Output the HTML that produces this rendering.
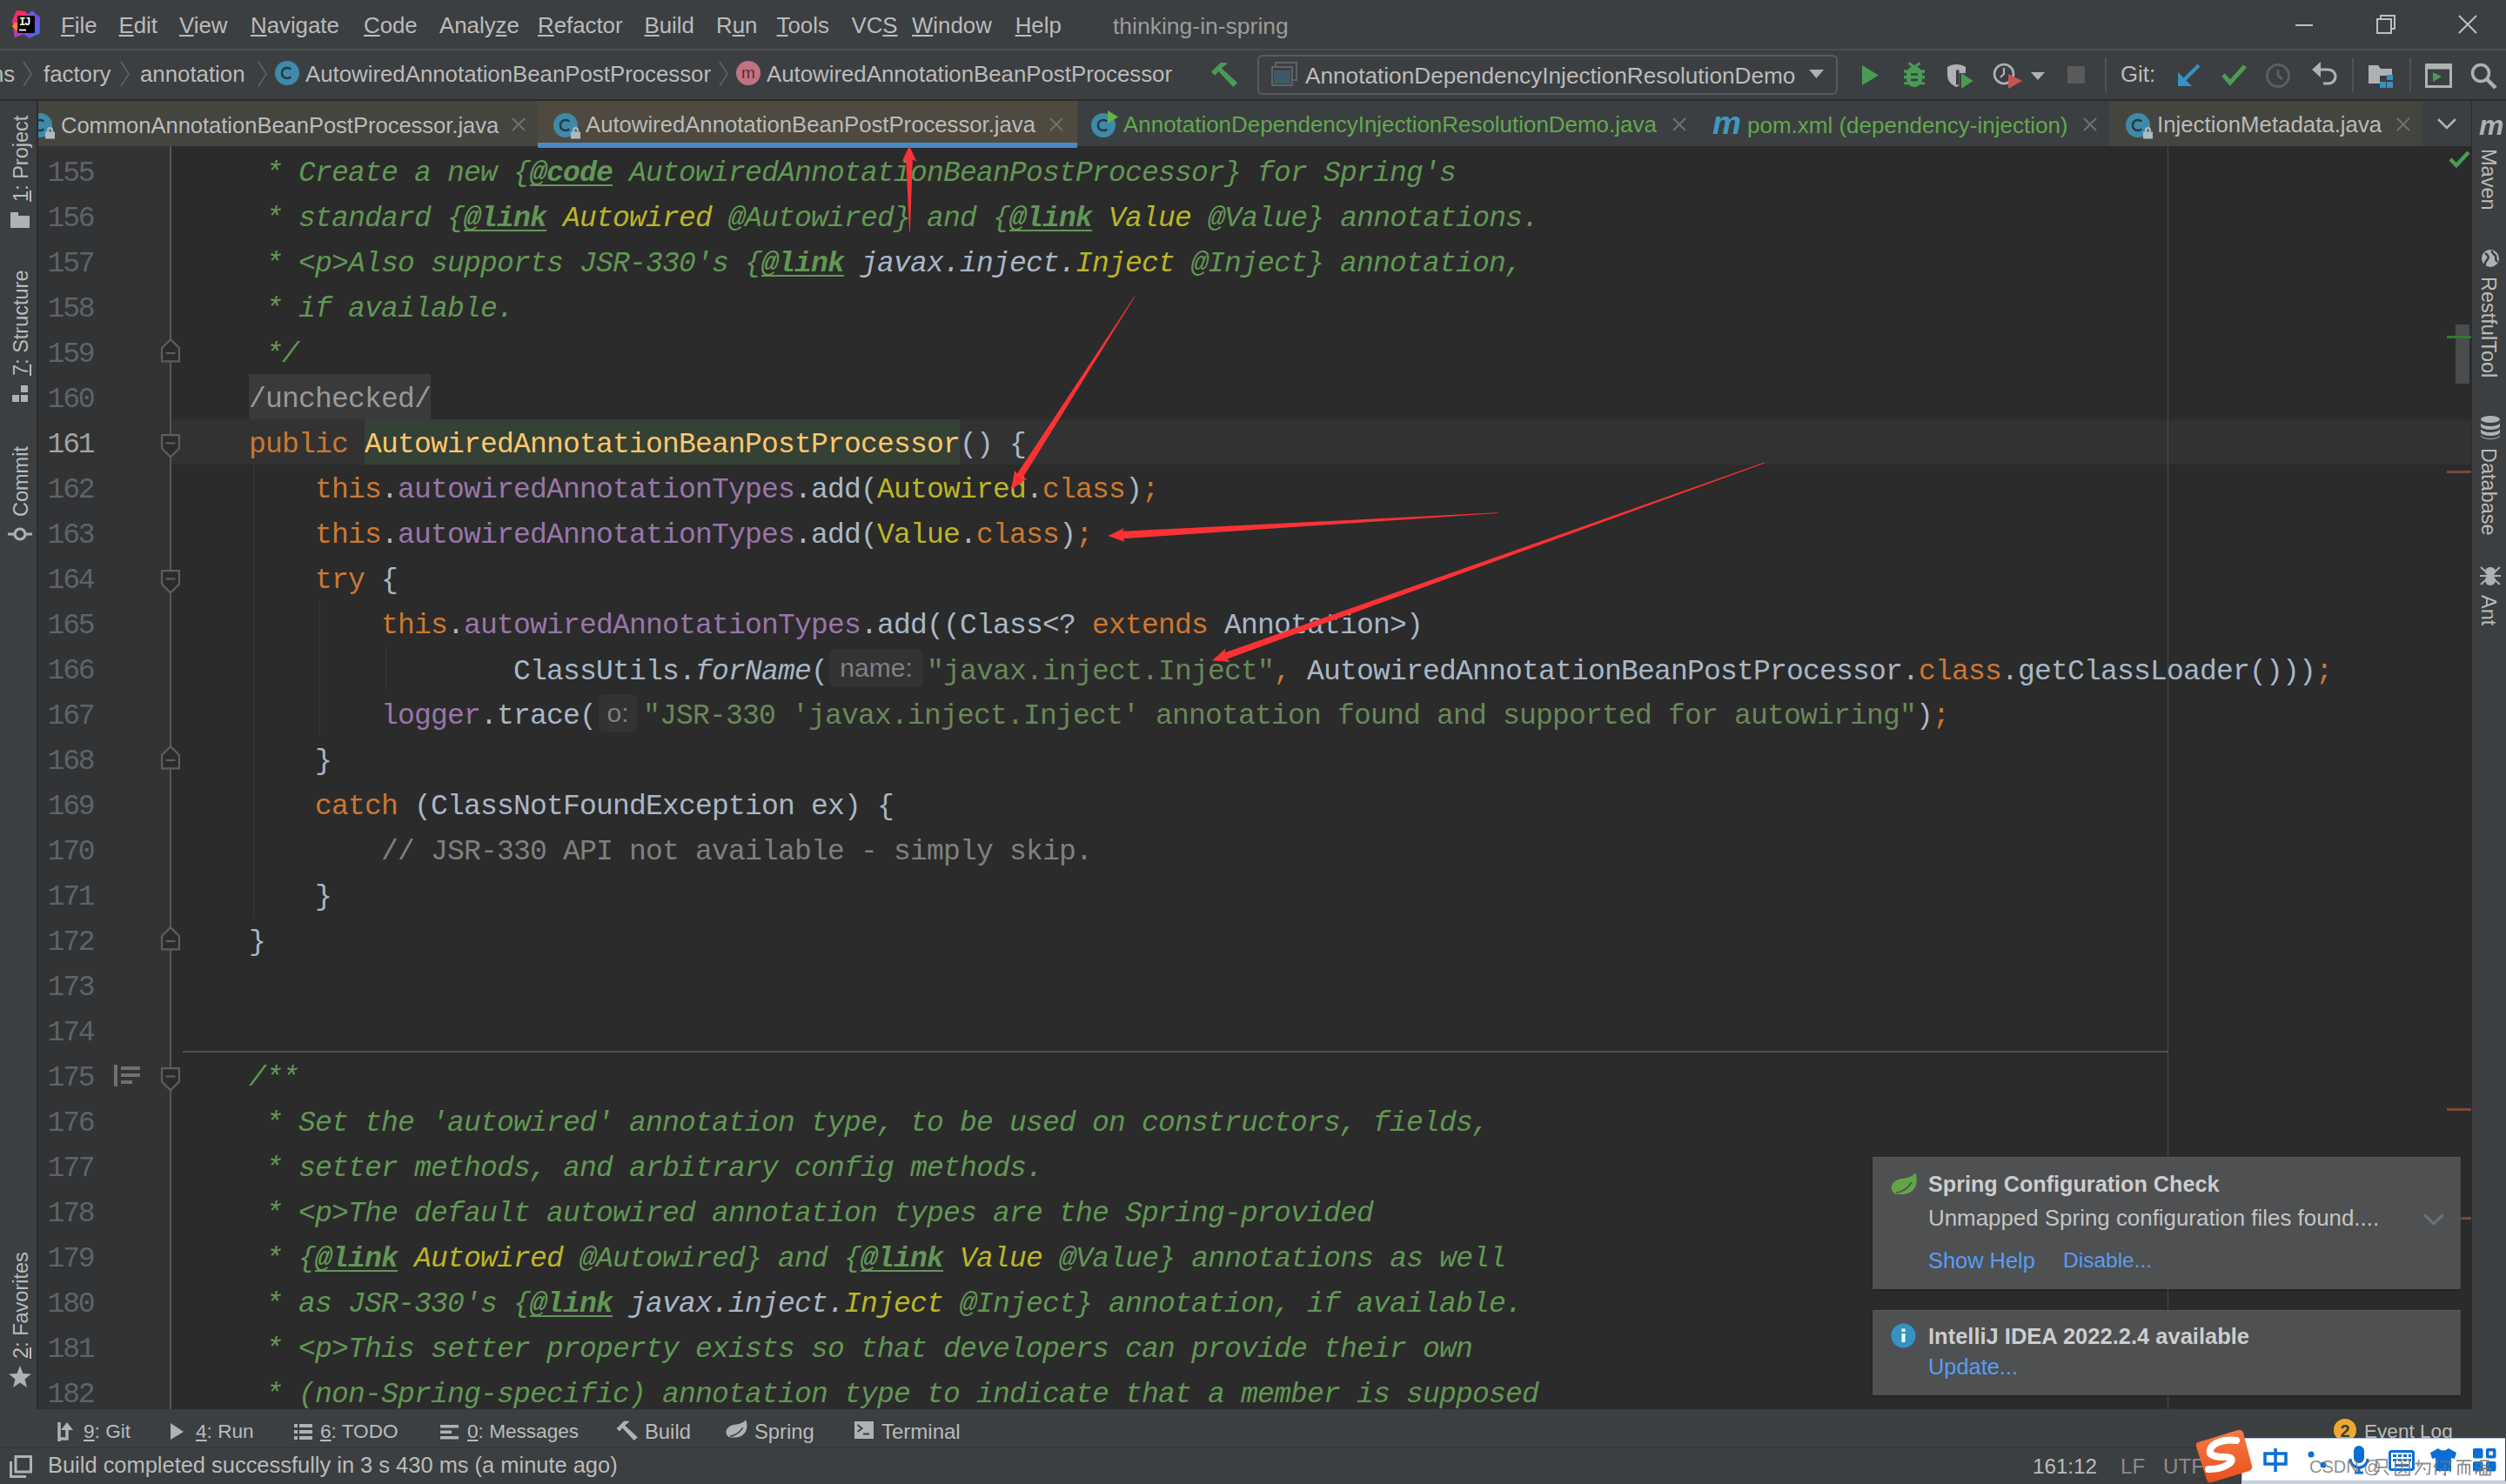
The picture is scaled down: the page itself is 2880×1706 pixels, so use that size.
<!DOCTYPE html><html><head><meta charset="utf-8"><style>
html,body{margin:0;padding:0;}
body{width:2880px;height:1706px;position:relative;overflow:hidden;background:#3c3f41;font-family:"Liberation Sans", sans-serif;}
.t{position:absolute;white-space:pre;}
.r{position:absolute;}
.t u{text-decoration:underline;text-decoration-thickness:2px;text-underline-offset:2px;}
.code{position:absolute;white-space:pre;font-family:"Liberation Mono", monospace;font-size:33px;line-height:52px;letter-spacing:-0.8030px;color:#a9b7c6;}
.ln{position:absolute;white-space:pre;font-family:"Liberation Mono", monospace;font-size:33px;line-height:52px;letter-spacing:-0.8030px;color:#606366;text-align:right;width:57px;}
.k{color:#cc7832} .f{color:#9876aa} .m{color:#ffc66d} .s{color:#6a8759} .c{color:#808080}
.an{color:#bbb529}
.dc{color:#629755;font-style:italic}
.dt{color:#629755;font-style:italic;font-weight:bold;text-decoration:underline;text-decoration-thickness:2px;text-underline-offset:4px}
.dr{color:#bbb529;font-style:italic}
.dp{color:#a9b7c6;font-style:italic}
.it{font-style:italic}
.hint{display:inline-block;position:relative;font-family:"Liberation Sans", sans-serif;letter-spacing:0;color:#808080;background:#333333;border-radius:7px;}
svg{position:absolute;overflow:visible}
</style></head><body>

<div class="r" style="left:0px;top:0px;width:2880px;height:56px;background:#3c3f41;"></div>
<div class="r" style="left:0px;top:56px;width:2880px;height:2px;background:#4b4d4f;"></div>
<div class="t" style="left:70px;top:17.16px;font-size:25.8px;line-height:25.8px;color:#bbbbbb;font-weight:normal;"><u>F</u>ile</div>
<div class="t" style="left:136.5px;top:17.16px;font-size:25.8px;line-height:25.8px;color:#bbbbbb;font-weight:normal;"><u>E</u>dit</div>
<div class="t" style="left:206px;top:17.16px;font-size:25.8px;line-height:25.8px;color:#bbbbbb;font-weight:normal;"><u>V</u>iew</div>
<div class="t" style="left:288px;top:17.16px;font-size:25.8px;line-height:25.8px;color:#bbbbbb;font-weight:normal;"><u>N</u>avigate</div>
<div class="t" style="left:418px;top:17.16px;font-size:25.8px;line-height:25.8px;color:#bbbbbb;font-weight:normal;"><u>C</u>ode</div>
<div class="t" style="left:505px;top:17.16px;font-size:25.8px;line-height:25.8px;color:#bbbbbb;font-weight:normal;">Analy<u>z</u>e</div>
<div class="t" style="left:618px;top:17.16px;font-size:25.8px;line-height:25.8px;color:#bbbbbb;font-weight:normal;"><u>R</u>efactor</div>
<div class="t" style="left:740.5px;top:17.16px;font-size:25.8px;line-height:25.8px;color:#bbbbbb;font-weight:normal;"><u>B</u>uild</div>
<div class="t" style="left:823px;top:17.16px;font-size:25.8px;line-height:25.8px;color:#bbbbbb;font-weight:normal;">R<u>u</u>n</div>
<div class="t" style="left:892.6px;top:17.16px;font-size:25.8px;line-height:25.8px;color:#bbbbbb;font-weight:normal;"><u>T</u>ools</div>
<div class="t" style="left:978.5px;top:17.16px;font-size:25.8px;line-height:25.8px;color:#bbbbbb;font-weight:normal;">VC<u>S</u></div>
<div class="t" style="left:1048px;top:17.16px;font-size:25.8px;line-height:25.8px;color:#bbbbbb;font-weight:normal;"><u>W</u>indow</div>
<div class="t" style="left:1166.7px;top:17.16px;font-size:25.8px;line-height:25.8px;color:#bbbbbb;font-weight:normal;"><u>H</u>elp</div>
<div class="t" style="left:1279px;top:16.57px;font-size:26.5px;line-height:26.5px;color:#9c9c9c;font-weight:normal;">thinking-in-spring</div>
<div class="r" style="left:0px;top:58px;width:2880px;height:56px;background:#3c3f41;"></div>
<div class="r" style="left:0px;top:114px;width:2880px;height:2px;background:#2b2b2b;"></div>
<div class="t" style="left:-10px;top:73.46px;font-size:25.8px;line-height:25.8px;color:#bbbbbb;font-weight:normal;">ns</div>
<svg style="left:26px;top:70px" width="12" height="30"><polyline points="1,1 10,15.0 1,29" fill="none" stroke="#5f6264" stroke-width="1.6"/></svg>
<div class="t" style="left:50px;top:73.46px;font-size:25.8px;line-height:25.8px;color:#bbbbbb;font-weight:normal;">factory</div>
<svg style="left:138px;top:70px" width="12" height="30"><polyline points="1,1 10,15.0 1,29" fill="none" stroke="#5f6264" stroke-width="1.6"/></svg>
<div class="t" style="left:161px;top:73.46px;font-size:25.8px;line-height:25.8px;color:#bbbbbb;font-weight:normal;">annotation</div>
<svg style="left:296px;top:70px" width="12" height="30"><polyline points="1,1 10,15.0 1,29" fill="none" stroke="#5f6264" stroke-width="1.6"/></svg>
<svg style="left:316px;top:70px" width="28" height="28"><circle cx="14" cy="14" r="14" fill="#3e8aa8"/><path d="M18.3 9.7 A6.1 6.1 0 1 0 18.3 18.3" fill="none" stroke="#26393f" stroke-width="2.5"/></svg>
<div class="t" style="left:351px;top:73.46px;font-size:25.8px;line-height:25.8px;color:#bbbbbb;font-weight:normal;">AutowiredAnnotationBeanPostProcessor</div>
<svg style="left:826px;top:70px" width="12" height="30"><polyline points="1,1 10,15.0 1,29" fill="none" stroke="#5f6264" stroke-width="1.6"/></svg>
<svg style="left:846px;top:70px" width="28" height="28"><circle cx="14" cy="14" r="14" fill="#c07482"/><text x="14" y="20" text-anchor="middle" font-family="Liberation Sans" font-size="19" fill="#5b2a35">m</text></svg>
<div class="t" style="left:881px;top:73.46px;font-size:25.8px;line-height:25.8px;color:#bbbbbb;font-weight:normal;">AutowiredAnnotationBeanPostProcessor</div>
<svg style="left:1385px;top:65px" width="40" height="40"><polygon points="7,17.8 17.8,7 25,7.3 25,8.4 18.9,13.5 25.5,19.5 37.2,30.2 32.3,35 22.1,24.3 15.4,17 11.3,21.8" fill="#499c54"/></svg>
<div class="r" style="left:1446px;top:64px;width:663px;height:42px;border:2px solid #5a5d5f;border-radius:6px;box-sizing:content-box;left:1445px;top:63px"></div>
<svg style="left:1461px;top:71px" width="30" height="28"><rect x="5" y="1" width="24" height="20" fill="none" stroke="#5f6366" stroke-width="2"/><rect x="1" y="6" width="23" height="21" fill="#3c3f41" stroke="#5f6366" stroke-width="2"/><rect x="3" y="10" width="19" height="15" fill="#3f5a66"/></svg>
<div class="t" style="left:1500px;top:73.82px;font-size:26.2px;line-height:26.2px;color:#bbbbbb;font-weight:normal;">AnnotationDependencyInjectionResolutionDemo</div>
<svg style="left:2079px;top:80px" width="18" height="11"><polygon points="0,0 17,0 8.5,10" fill="#aeb0b2"/></svg>
<svg style="left:2140px;top:75px" width="20" height="24"><polygon points="0,0 19,11.5 0,23" fill="#499c54"/></svg>
<svg style="left:2186px;top:70px" width="28" height="32"><g fill="#499c54"><polyline points="7.5,2.5 14,7 20.5,2.5" fill="none" stroke="#499c54" stroke-width="3"/><ellipse cx="14" cy="18" rx="9.5" ry="12"/><rect x="2" y="10.4" width="24" height="3.4"/><rect x="2" y="17" width="24" height="3.5"/><rect x="2" y="24.4" width="24" height="2.8"/></g><g fill="#3c3f41"><rect x="10" y="14.3" width="8" height="2.4"/><rect x="10" y="20.5" width="8" height="2.8"/></g></svg>
<svg style="left:2236px;top:72px" width="34" height="32"><path d="M2 5 C8 1 17 1 23 5 L23 15 C23 22 18 26 12 28 C6 25 2 21 2 14 Z" fill="#afb1b3"/><rect x="12" y="8.5" width="3.5" height="17" fill="#3c3f41"/><rect x="15.5" y="12" width="9" height="18" fill="#3c3f41"/><polygon points="18,12 31.5,21 18,30" fill="#499c54"/></svg>
<svg style="left:2291px;top:71px" width="36" height="32"><circle cx="12" cy="14" r="11" fill="none" stroke="#afb1b3" stroke-width="2.6"/><path d="M12 7 L12 14 L8 18" fill="none" stroke="#afb1b3" stroke-width="2.2"/><polygon points="17,14 33,22 17,31" fill="#c75450"/></svg>
<svg style="left:2334px;top:83px" width="17" height="10"><polygon points="0,0 16,0 8,9" fill="#afb1b3"/></svg>
<div class="r" style="left:2376px;top:76px;width:20px;height:20px;background:#5a5a5a;"></div>
<div class="r" style="left:2419px;top:67px;width:2px;height:38px;background:#515456;"></div>
<div class="t" style="left:2437px;top:73.16px;font-size:25.8px;line-height:25.8px;color:#bbbbbb;font-weight:normal;">Git:</div>
<svg style="left:2503px;top:73px" width="26" height="26"><path d="M24 2 L5 21" stroke="#3592c4" stroke-width="4"/><polygon points="0,26 0,10 16,26" fill="#3592c4"/></svg>
<svg style="left:2553px;top:73px" width="30" height="26"><polyline points="2,13 10,22 27,3" fill="none" stroke="#499c54" stroke-width="5"/></svg>
<svg style="left:2603px;top:72px" width="30" height="30"><circle cx="15" cy="15" r="12.5" fill="none" stroke="#5b5e60" stroke-width="3"/><path d="M15 8 L15 15 L20 19" fill="none" stroke="#5b5e60" stroke-width="3"/></svg>
<svg style="left:2657px;top:71px" width="30" height="30"><path d="M8 9 L19 9 A8 8 0 0 1 19 25 L13 25" fill="none" stroke="#afb1b3" stroke-width="3.2"/><polygon points="0,9 10,0 10,18" fill="#afb1b3"/></svg>
<div class="r" style="left:2703px;top:67px;width:2px;height:38px;background:#515456;"></div>
<svg style="left:2721px;top:74px" width="32" height="28"><path d="M1 1 L12 1 L15 5 L28 5 L28 22 L1 22 Z" fill="#afb1b3"/><rect x="14" y="13" width="17" height="15" fill="#3c3f41"/><rect x="22" y="12" width="7" height="6" fill="#3592c4"/><rect x="14" y="20" width="7" height="7" fill="#3592c4"/><rect x="22" y="20" width="7" height="7" fill="#3592c4"/></svg>
<div class="r" style="left:2769px;top:67px;width:2px;height:38px;background:#515456;"></div>
<svg style="left:2787px;top:73px" width="32" height="28"><rect x="1.5" y="1.5" width="28" height="25" fill="none" stroke="#afb1b3" stroke-width="3"/><rect x="1.5" y="1.5" width="28" height="5" fill="#afb1b3"/><polygon points="9,10 19,15 9,21" fill="#499c54"/></svg>
<svg style="left:2839px;top:72px" width="32" height="32"><circle cx="12" cy="12" r="9.5" fill="none" stroke="#afb1b3" stroke-width="3.5"/><path d="M19 19 L29 29" stroke="#afb1b3" stroke-width="4.5"/></svg>
<div class="r" style="left:44px;top:116px;width:2797px;height:52px;background:#3c3f41;"></div>
<div class="r" style="left:44px;top:116px;width:574px;height:52px;background:#45453f;"></div>
<div class="r" style="left:618px;top:116px;width:620px;height:52px;background:#4e4a3f;"></div>
<div class="r" style="left:618px;top:164px;width:620px;height:6px;background:#4a88c7;"></div>
<div class="r" style="left:2424px;top:116px;width:360px;height:52px;background:#45453f;"></div>
<div class="r" style="left:44px;top:116px;width:30px;height:52px;overflow:hidden">
<svg style="left:-12px;top:14px" width="28" height="28"><circle cx="14" cy="14" r="14" fill="#3e8aa8"/><path d="M18.3 9.7 A6.1 6.1 0 1 0 18.3 18.3" fill="none" stroke="#26393f" stroke-width="2.5"/></svg>
</div>
<svg style="left:52px;top:145px" width="11" height="15"><path d="M3 7 L3 4.5 A2.5 2.5 0 0 1 8 4.5 L8 7" fill="none" stroke="#aeb9c0" stroke-width="2"/><rect x="0" y="6.5" width="11" height="8" fill="#aeb9c0"/></svg>
<div class="t" style="left:70px;top:131.61px;font-size:25.5px;line-height:25.5px;color:#bbbbbb;font-weight:normal;">CommonAnnotationBeanPostProcessor.java</div>
<svg style="left:588px;top:135px" width="16" height="16"><path d="M1 1 L15 15 M15 1 L1 15" stroke="#6f7173" stroke-width="2"/></svg>
<svg style="left:636px;top:130px" width="28" height="28"><circle cx="14" cy="14" r="14" fill="#3e8aa8"/><path d="M18.3 9.7 A6.1 6.1 0 1 0 18.3 18.3" fill="none" stroke="#26393f" stroke-width="2.5"/></svg>
<svg style="left:656px;top:145px" width="11" height="15"><path d="M3 7 L3 4.5 A2.5 2.5 0 0 1 8 4.5 L8 7" fill="none" stroke="#aeb9c0" stroke-width="2"/><rect x="0" y="6.5" width="11" height="8" fill="#aeb9c0"/></svg>
<div class="t" style="left:673px;top:131.44px;font-size:25.7px;line-height:25.7px;color:#bbbbbb;font-weight:normal;">AutowiredAnnotationBeanPostProcessor.java</div>
<svg style="left:1206px;top:135px" width="16" height="16"><path d="M1 1 L15 15 M15 1 L1 15" stroke="#6f7173" stroke-width="2"/></svg>
<svg style="left:1254px;top:130px" width="28" height="28"><circle cx="14" cy="14" r="14" fill="#3e8aa8"/><path d="M18.3 9.7 A6.1 6.1 0 1 0 18.3 18.3" fill="none" stroke="#26393f" stroke-width="2.5"/></svg>
<svg style="left:1273px;top:127px" width="13" height="16"><polygon points="0,0 12,7.5 0,15" fill="#62b543"/></svg>
<div class="t" style="left:1291px;top:131.23px;font-size:25.95px;line-height:25.95px;color:#62a84f;font-weight:normal;">AnnotationDependencyInjectionResolutionDemo.java</div>
<svg style="left:1922px;top:135px" width="16" height="16"><path d="M1 1 L15 15 M15 1 L1 15" stroke="#6f7173" stroke-width="2"/></svg>
<div class="t" style="left:1968px;top:123px;font-size:37px;line-height:37px;font-weight:bold;font-style:italic;color:#3f98bf;letter-spacing:-1px">m</div>
<div class="t" style="left:2008px;top:131.19px;font-size:26.0px;line-height:26.0px;color:#62a84f;font-weight:normal;">pom.xml (dependency-injection)</div>
<svg style="left:2394px;top:135px" width="16" height="16"><path d="M1 1 L15 15 M15 1 L1 15" stroke="#6f7173" stroke-width="2"/></svg>
<svg style="left:2443px;top:130px" width="28" height="28"><circle cx="14" cy="14" r="14" fill="#3e8aa8"/><path d="M18.3 9.7 A6.1 6.1 0 1 0 18.3 18.3" fill="none" stroke="#26393f" stroke-width="2.5"/></svg>
<svg style="left:2463px;top:145px" width="11" height="15"><path d="M3 7 L3 4.5 A2.5 2.5 0 0 1 8 4.5 L8 7" fill="none" stroke="#aeb9c0" stroke-width="2"/><rect x="0" y="6.5" width="11" height="8" fill="#aeb9c0"/></svg>
<div class="t" style="left:2479px;top:131.36px;font-size:25.8px;line-height:25.8px;color:#bbbbbb;font-weight:normal;">InjectionMetadata.java</div>
<svg style="left:2754px;top:135px" width="16" height="16"><path d="M1 1 L15 15 M15 1 L1 15" stroke="#6f7173" stroke-width="2"/></svg>
<svg style="left:2801px;top:136px" width="22" height="13"><polyline points="1,1 11,11 21,1" fill="none" stroke="#afb1b3" stroke-width="2.6"/></svg>
<div class="r" style="left:0px;top:116px;width:42px;height:1504px;background:#3c3f41;"></div>
<div class="r" style="left:42px;top:116px;width:2px;height:1504px;background:#2b2b2b;"></div>
<div class="r" style="left:44px;top:168px;width:153px;height:1452px;background:#313335;"></div>
<div class="r" style="left:197px;top:168px;width:2644px;height:1452px;background:#2b2b2b;"></div>
<div class="r" style="left:618px;top:164px;width:620px;height:6px;background:#4a88c7;"></div>
<div class="r" style="left:44px;top:482px;width:2797px;height:52px;background:#323232;"></div>
<div class="r" style="left:195px;top:168px;width:2px;height:1452px;background:#555759;"></div>
<div class="r" style="left:2491px;top:168px;width:1px;height:1452px;background:#4b4b4b;"></div>
<div class="r" style="left:210px;top:1208px;width:2281px;height:2px;background:#505050;"></div>
<div class="r" style="left:419px;top:482px;width:684px;height:52px;background:#344134;"></div>
<div class="r" style="left:291px;top:534px;width:1px;height:520px;background:#393939;"></div>
<div class="r" style="left:367px;top:690px;width:1px;height:156px;background:#393939;"></div>
<div class="r" style="left:443px;top:742px;width:1px;height:52px;background:#393939;"></div>
<svg style="left:185px;top:389px" width="23" height="29"><path d="M11 1.1 L20.9 11 V26.4 H1.1 V11 Z" fill="#2b2b2b" stroke="#5b5d5f" stroke-width="2.2"/><path d="M5.5 17 H16.5" stroke="#5b5d5f" stroke-width="2.2"/></svg>
<svg style="left:185px;top:499px" width="23" height="29"><path d="M1.1 1.1 H20.9 V16.5 L11 26.4 L1.1 16.5 Z" fill="#2b2b2b" stroke="#5b5d5f" stroke-width="2.2"/><path d="M5.5 10.5 H16.5" stroke="#5b5d5f" stroke-width="2.2"/></svg>
<svg style="left:185px;top:655px" width="23" height="29"><path d="M1.1 1.1 H20.9 V16.5 L11 26.4 L1.1 16.5 Z" fill="#2b2b2b" stroke="#5b5d5f" stroke-width="2.2"/><path d="M5.5 10.5 H16.5" stroke="#5b5d5f" stroke-width="2.2"/></svg>
<svg style="left:185px;top:857px" width="23" height="29"><path d="M11 1.1 L20.9 11 V26.4 H1.1 V11 Z" fill="#2b2b2b" stroke="#5b5d5f" stroke-width="2.2"/><path d="M5.5 17 H16.5" stroke="#5b5d5f" stroke-width="2.2"/></svg>
<svg style="left:185px;top:1065px" width="23" height="29"><path d="M11 1.1 L20.9 11 V26.4 H1.1 V11 Z" fill="#2b2b2b" stroke="#5b5d5f" stroke-width="2.2"/><path d="M5.5 17 H16.5" stroke="#5b5d5f" stroke-width="2.2"/></svg>
<svg style="left:185px;top:1227px" width="23" height="29"><path d="M1.1 1.1 H20.9 V16.5 L11 26.4 L1.1 16.5 Z" fill="#2b2b2b" stroke="#5b5d5f" stroke-width="2.2"/><path d="M5.5 10.5 H16.5" stroke="#5b5d5f" stroke-width="2.2"/></svg>
<svg style="left:131px;top:1224px" width="31" height="26"><g fill="#6e7072"><rect x="0" y="0" width="4" height="25"/><rect x="8" y="2" width="22" height="4"/><rect x="8" y="10" width="22" height="4"/><rect x="8" y="18" width="13" height="4"/></g></svg>
<svg style="left:2814px;top:173px" width="25" height="21"><polyline points="2,10 9,17 23,2" fill="none" stroke="#499c54" stroke-width="4.5"/></svg>
<div class="r" style="left:2822px;top:373px;width:16px;height:68px;background:#494b4d;"></div>
<div class="r" style="left:2812px;top:386px;width:28px;height:3px;background:#2f7a33;"></div>
<div class="r" style="left:2812px;top:541px;width:28px;height:3px;background:#7a4a36;"></div>
<div class="r" style="left:2812px;top:1274px;width:28px;height:3px;background:#7a4a36;"></div>
<div class="r" style="left:2812px;top:1399px;width:28px;height:3px;background:#7a4a36;"></div>
<div class="ln" style="left:54.6px;top:174.4px;color:#606366;letter-spacing:-2.2px;text-align:left">155</div>
<div class="ln" style="left:54.6px;top:226.4px;color:#606366;letter-spacing:-2.2px;text-align:left">156</div>
<div class="ln" style="left:54.6px;top:278.4px;color:#606366;letter-spacing:-2.2px;text-align:left">157</div>
<div class="ln" style="left:54.6px;top:330.4px;color:#606366;letter-spacing:-2.2px;text-align:left">158</div>
<div class="ln" style="left:54.6px;top:382.4px;color:#606366;letter-spacing:-2.2px;text-align:left">159</div>
<div class="ln" style="left:54.6px;top:434.4px;color:#606366;letter-spacing:-2.2px;text-align:left">160</div>
<div class="ln" style="left:54.6px;top:486.4px;color:#a4a3a3;letter-spacing:-2.2px;text-align:left">161</div>
<div class="ln" style="left:54.6px;top:538.4px;color:#606366;letter-spacing:-2.2px;text-align:left">162</div>
<div class="ln" style="left:54.6px;top:590.4px;color:#606366;letter-spacing:-2.2px;text-align:left">163</div>
<div class="ln" style="left:54.6px;top:642.4px;color:#606366;letter-spacing:-2.2px;text-align:left">164</div>
<div class="ln" style="left:54.6px;top:694.4px;color:#606366;letter-spacing:-2.2px;text-align:left">165</div>
<div class="ln" style="left:54.6px;top:746.4px;color:#606366;letter-spacing:-2.2px;text-align:left">166</div>
<div class="ln" style="left:54.6px;top:798.4px;color:#606366;letter-spacing:-2.2px;text-align:left">167</div>
<div class="ln" style="left:54.6px;top:850.4px;color:#606366;letter-spacing:-2.2px;text-align:left">168</div>
<div class="ln" style="left:54.6px;top:902.4px;color:#606366;letter-spacing:-2.2px;text-align:left">169</div>
<div class="ln" style="left:54.6px;top:954.4px;color:#606366;letter-spacing:-2.2px;text-align:left">170</div>
<div class="ln" style="left:54.6px;top:1006.4px;color:#606366;letter-spacing:-2.2px;text-align:left">171</div>
<div class="ln" style="left:54.6px;top:1058.4px;color:#606366;letter-spacing:-2.2px;text-align:left">172</div>
<div class="ln" style="left:54.6px;top:1110.4px;color:#606366;letter-spacing:-2.2px;text-align:left">173</div>
<div class="ln" style="left:54.6px;top:1162.4px;color:#606366;letter-spacing:-2.2px;text-align:left">174</div>
<div class="ln" style="left:54.6px;top:1214.4px;color:#606366;letter-spacing:-2.2px;text-align:left">175</div>
<div class="ln" style="left:54.6px;top:1266.4px;color:#606366;letter-spacing:-2.2px;text-align:left">176</div>
<div class="ln" style="left:54.6px;top:1318.4px;color:#606366;letter-spacing:-2.2px;text-align:left">177</div>
<div class="ln" style="left:54.6px;top:1370.4px;color:#606366;letter-spacing:-2.2px;text-align:left">178</div>
<div class="ln" style="left:54.6px;top:1422.4px;color:#606366;letter-spacing:-2.2px;text-align:left">179</div>
<div class="ln" style="left:54.6px;top:1474.4px;color:#606366;letter-spacing:-2.2px;text-align:left">180</div>
<div class="ln" style="left:54.6px;top:1526.4px;color:#606366;letter-spacing:-2.2px;text-align:left">181</div>
<div class="ln" style="left:54.6px;top:1578.4px;color:#606366;letter-spacing:-2.2px;text-align:left">182</div>
<div class="code" style="left:210px;top:174.4px"><span class="dc">     * Create a new {</span><span class="dt">@code</span><span class="dc"> AutowiredAnnotationBeanPostProcessor} for Spring&#x27;s</span></div>
<div class="code" style="left:210px;top:226.4px"><span class="dc">     * standard {</span><span class="dt">@link</span><span class="dc"> </span><span class="dr">Autowired</span><span class="dc"> @Autowired} and {</span><span class="dt">@link</span><span class="dc"> </span><span class="dr">Value</span><span class="dc"> @Value} annotations.</span></div>
<div class="code" style="left:210px;top:278.4px"><span class="dc">     * &lt;p&gt;Also supports JSR-330&#x27;s {</span><span class="dt">@link</span><span class="dc"> </span><span class="dp">javax.inject.</span><span class="dr">Inject</span><span class="dc"> @Inject} annotation,</span></div>
<div class="code" style="left:210px;top:330.4px"><span class="dc">     * if available.</span></div>
<div class="code" style="left:210px;top:382.4px"><span class="dc">     */</span></div>
<div class="code" style="left:210px;top:486.4px">    <span class="k">public</span> <span class="m">AutowiredAnnotationBeanPostProcessor</span>() {</div>
<div class="code" style="left:210px;top:538.4px">        <span class="k">this</span>.<span class="f">autowiredAnnotationTypes</span>.add(<span class="an">Autowired</span>.<span class="k">class</span>)<span class="k">;</span></div>
<div class="code" style="left:210px;top:590.4px">        <span class="k">this</span>.<span class="f">autowiredAnnotationTypes</span>.add(<span class="an">Value</span>.<span class="k">class</span>)<span class="k">;</span></div>
<div class="code" style="left:210px;top:642.4px">        <span class="k">try</span> {</div>
<div class="code" style="left:210px;top:694.4px">            <span class="k">this</span>.<span class="f">autowiredAnnotationTypes</span>.add((Class&lt;? <span class="k">extends</span> Annotation&gt;)</div>
<div class="code" style="left:210px;top:746.4px">                    ClassUtils.<span class="it">forName</span>(<span class="hint" style="margin-left:2px;margin-right:4px;width:108px;height:44px;line-height:44px;font-size:30px;vertical-align:3px;text-align:center">name:</span><span class="s">&quot;javax.inject.Inject&quot;</span><span class="k">,</span> AutowiredAnnotationBeanPostProcessor.<span class="k">class</span>.getClassLoader()))<span class="k">;</span></div>
<div class="code" style="left:210px;top:798.4px">            <span class="f">logger</span>.trace(<span class="hint" style="margin-left:3px;margin-right:7px;width:44px;height:44px;line-height:44px;font-size:30px;vertical-align:2px;text-align:center">o:</span><span class="s">&quot;JSR-330 &#x27;javax.inject.Inject&#x27; annotation found and supported for autowiring&quot;</span>)<span class="k">;</span></div>
<div class="code" style="left:210px;top:850.4px">        }</div>
<div class="code" style="left:210px;top:902.4px">        <span class="k">catch</span> (ClassNotFoundException ex) {</div>
<div class="code" style="left:210px;top:954.4px">            <span class="c">// JSR-330 API not available - simply skip.</span></div>
<div class="code" style="left:210px;top:1006.4px">        }</div>
<div class="code" style="left:210px;top:1058.4px">    }</div>
<div class="code" style="left:210px;top:1214.4px"><span class="dc">    /**</span></div>
<div class="code" style="left:210px;top:1266.4px"><span class="dc">     * Set the &#x27;autowired&#x27; annotation type, to be used on constructors, fields,</span></div>
<div class="code" style="left:210px;top:1318.4px"><span class="dc">     * setter methods, and arbitrary config methods.</span></div>
<div class="code" style="left:210px;top:1370.4px"><span class="dc">     * &lt;p&gt;The default autowired annotation types are the Spring-provided</span></div>
<div class="code" style="left:210px;top:1422.4px"><span class="dc">     * {</span><span class="dt">@link</span><span class="dc"> </span><span class="dr">Autowired</span><span class="dc"> @Autowired} and {</span><span class="dt">@link</span><span class="dc"> </span><span class="dr">Value</span><span class="dc"> @Value} annotations as well</span></div>
<div class="code" style="left:210px;top:1474.4px"><span class="dc">     * as JSR-330&#x27;s {</span><span class="dt">@link</span><span class="dc"> </span><span class="dp">javax.inject.</span><span class="dr">Inject</span><span class="dc"> @Inject} annotation, if available.</span></div>
<div class="code" style="left:210px;top:1526.4px"><span class="dc">     * &lt;p&gt;This setter property exists so that developers can provide their own</span></div>
<div class="code" style="left:210px;top:1578.4px"><span class="dc">     * (non-Spring-specific) annotation type to indicate that a member is supposed</span></div>
<div class="r" style="left:286px;top:430px;width:209px;height:52px;background:#3a3a3a;"></div>
<div class="code" style="left:286px;top:434.4px;color:#999999">/unchecked/</div>
<div class="r" style="left:2841px;top:116px;width:39px;height:1504px;background:#3c3f41;"></div>
<div class="r" style="left:2840px;top:116px;width:1px;height:1504px;background:#2b2b2b;"></div>
<div class="r" style="left:0px;top:1620px;width:2880px;height:44px;background:#3c3f41;"></div>
<div class="r" style="left:0px;top:1664px;width:2880px;height:1px;background:#323232;"></div>
<div class="r" style="left:0px;top:1665px;width:2880px;height:41px;background:#3c3f41;"></div>
<div class="t" style="left:13.4px;top:232px;font-size:23.5px;line-height:23.5px;color:#bbbbbb;transform-origin:0 0;transform:rotate(-90deg)"><u>1</u>: Project</div>
<svg style="left:12px;top:244px" width="22" height="18"><path d="M0 0 L9 0 L9 4 L22 4 L22 18 L0 18 Z" fill="#afb1b3"/></svg>
<div class="t" style="left:13.4px;top:432px;font-size:23.5px;line-height:23.5px;color:#bbbbbb;transform-origin:0 0;transform:rotate(-90deg)"><u>7</u>: Structure</div>
<svg style="left:14px;top:443px" width="18" height="19"><rect x="10" y="0" width="8" height="8" fill="#afb1b3"/><rect x="0" y="11" width="8" height="8" fill="#afb1b3"/><rect x="10" y="11" width="8" height="8" fill="#afb1b3"/></svg>
<div class="t" style="left:13.4px;top:594px;font-size:23.5px;line-height:23.5px;color:#bbbbbb;transform-origin:0 0;transform:rotate(-90deg)">Commit</div>
<svg style="left:9px;top:605px" width="28" height="18"><circle cx="14" cy="9" r="6" fill="none" stroke="#afb1b3" stroke-width="3.2"/><path d="M0 9 L8 9 M20 9 L28 9" stroke="#afb1b3" stroke-width="3.2"/></svg>
<div class="t" style="left:13.4px;top:1562px;font-size:23.5px;line-height:23.5px;color:#bbbbbb;transform-origin:0 0;transform:rotate(-90deg)"><u>2</u>: Favorites</div>
<svg style="left:10px;top:1570px" width="26" height="26"><polygon points="13,0 16.5,9 26,9.5 18.5,15.5 21,25 13,19.5 5,25 7.5,15.5 0,9.5 9.5,9" fill="#afb1b3"/></svg>
<div class="t" style="left:2849px;top:128px;font-size:32px;line-height:32px;font-weight:bold;font-style:italic;color:#afb1b3;letter-spacing:-1px">m</div>
<div class="t" style="left:2871.1px;top:171px;font-size:23.5px;line-height:23.5px;color:#bbbbbb;transform-origin:0 0;transform:rotate(90deg)">Maven</div>
<svg style="left:2851px;top:286px" width="22" height="22"><circle cx="11" cy="11" r="10" fill="#afb1b3"/><path d="M5 5 C8 7 10 9 8 12 C6 14 4 15 5 19 M13 2 C12 5 15 6 17 8 C18 10 16 13 19 15" fill="none" stroke="#3c3f41" stroke-width="2.5"/></svg>
<div class="t" style="left:2871.1px;top:318px;font-size:23.5px;line-height:23.5px;color:#bbbbbb;transform-origin:0 0;transform:rotate(90deg)">RestfulTool</div>
<svg style="left:2850px;top:478px" width="24" height="27"><g fill="#afb1b3"><ellipse cx="12" cy="4" rx="11" ry="4"/><path d="M1 8 A11 4 0 0 0 23 8 L23 12 A11 4 0 0 1 1 12 Z"/><path d="M1 15 A11 4 0 0 0 23 15 L23 19 A11 4 0 0 1 1 19 Z"/><path d="M1 22 A11 4 0 0 0 23 22 L23 23 A11 4 0 0 1 1 23 Z"/></g></svg>
<div class="t" style="left:2871.1px;top:515px;font-size:23.5px;line-height:23.5px;color:#bbbbbb;transform-origin:0 0;transform:rotate(90deg)">Database</div>
<svg style="left:2850px;top:650px" width="24" height="24"><g fill="#afb1b3"><ellipse cx="12" cy="7" rx="6" ry="5"/><ellipse cx="12" cy="17" rx="6" ry="6"/></g><path d="M1 2 L23 22 M23 2 L1 22 M0 12 L24 12" stroke="#afb1b3" stroke-width="2"/></svg>
<div class="t" style="left:2871.1px;top:684px;font-size:23.5px;line-height:23.5px;color:#bbbbbb;transform-origin:0 0;transform:rotate(90deg)">Ant</div>
<svg style="left:66px;top:1635px" width="22" height="22"><path d="M2 0 L2 22 M2 19 L11 19 L11 8" fill="none" stroke="#afb1b3" stroke-width="3.5"/><polygon points="4,9 11,0 18,9" fill="#afb1b3"/></svg>
<div class="t" style="left:96px;top:1634.87px;font-size:22.6px;line-height:22.6px;color:#bbbbbb;font-weight:normal;"><u>9</u>: Git</div>
<svg style="left:196px;top:1636px" width="16" height="20"><polygon points="0,0 15,10 0,19" fill="#afb1b3"/></svg>
<div class="t" style="left:225px;top:1634.87px;font-size:22.6px;line-height:22.6px;color:#bbbbbb;font-weight:normal;"><u>4</u>: Run</div>
<svg style="left:338px;top:1637px" width="21" height="18"><g fill="#afb1b3"><rect x="0" y="0" width="4" height="4"/><rect x="6" y="0" width="15" height="4"/><rect x="0" y="7" width="4" height="4"/><rect x="6" y="7" width="15" height="4"/><rect x="0" y="14" width="4" height="4"/><rect x="6" y="14" width="15" height="4"/></g></svg>
<div class="t" style="left:368px;top:1634.87px;font-size:22.6px;line-height:22.6px;color:#bbbbbb;font-weight:normal;"><u>6</u>: TODO</div>
<svg style="left:506px;top:1638px" width="21" height="17"><g fill="#afb1b3"><rect x="0" y="0" width="21" height="3.5"/><rect x="0" y="6.5" width="13" height="3.5"/><rect x="0" y="13" width="21" height="3.5"/></g></svg>
<div class="t" style="left:537px;top:1634.87px;font-size:22.6px;line-height:22.6px;color:#bbbbbb;font-weight:normal;"><u>0</u>: Messages</div>
<svg style="left:700px;top:1626px" width="40" height="40"><g transform="translate(3,2) scale(0.8)"><polygon points="7,17.8 17.8,7 25,7.3 25,8.4 18.9,13.5 25.5,19.5 37.2,30.2 32.3,35 22.1,24.3 15.4,17 11.3,21.8" fill="#afb1b3"/></g></svg>
<div class="t" style="left:741px;top:1633.85px;font-size:23.8px;line-height:23.8px;color:#bbbbbb;font-weight:normal;">Build</div>
<svg style="left:834px;top:1632px" width="26" height="24"><g transform="scale(0.82)"><path d="M6 25 C-4 20 1 8 13 7 C20 6 26 4 28 0 C32 9 30 24 14 25 Z" fill="#afb1b3"/><path d="M6 23.5 C13 22 20 18 24 11" stroke="#3c3f41" stroke-width="1.8" fill="none"/></g></svg>
<div class="t" style="left:867px;top:1633.85px;font-size:23.8px;line-height:23.8px;color:#bbbbbb;font-weight:normal;">Spring</div>
<svg style="left:982px;top:1634px" width="22" height="20"><rect x="0" y="0" width="22" height="20" fill="#afb1b3"/><polyline points="3.5,4 8.5,8 3.5,12" fill="none" stroke="#3c3f41" stroke-width="2"/><rect x="10" y="13.5" width="7" height="2" fill="#3c3f41"/></svg>
<div class="t" style="left:1013px;top:1633.68px;font-size:24.0px;line-height:24.0px;color:#bbbbbb;font-weight:normal;">Terminal</div>
<svg style="left:2682px;top:1631px" width="26" height="26"><circle cx="13" cy="13" r="13" fill="#f0a732"/><text x="13" y="21" text-anchor="middle" font-family="Liberation Sans" font-size="20" font-weight="bold" fill="#3c3f41">2</text></svg>
<div class="t" style="left:2717px;top:1634.87px;font-size:22.6px;line-height:22.6px;color:#bbbbbb;font-weight:normal;">Event Log</div>
<svg style="left:11px;top:1673px" width="26" height="26"><rect x="7" y="1.5" width="17.5" height="17.5" fill="none" stroke="#afb1b3" stroke-width="3"/><path d="M1.5 7 L1.5 24.5 L19 24.5" fill="none" stroke="#afb1b3" stroke-width="3"/></svg>
<div class="t" style="left:55px;top:1672.46px;font-size:25.45px;line-height:25.45px;color:#bbbbbb;font-weight:normal;">Build completed successfully in 3 s 430 ms (a minute ago)</div>
<div class="t" style="left:2336px;top:1673.51px;font-size:24.2px;line-height:24.2px;color:#bbbbbb;font-weight:normal;">161:12</div>
<div class="t" style="left:2437px;top:1673.51px;font-size:24.2px;line-height:24.2px;color:#8c8c8c;font-weight:normal;">LF</div>
<div class="t" style="left:2486px;top:1673.51px;font-size:24.2px;line-height:24.2px;color:#8c8c8c;font-weight:normal;">UTF-8</div>
<svg style="left:0px;top:0px" width="56" height="56"><defs><linearGradient id="gb" x1="0" y1="0" x2="1" y2="1"><stop offset="0" stop-color="#3d7ee8"/><stop offset="0.5" stop-color="#7b47e0"/><stop offset="1" stop-color="#2f7fef"/></linearGradient><linearGradient id="gp" x1="0" y1="0" x2="0" y2="1"><stop offset="0" stop-color="#fe2857"/><stop offset="1" stop-color="#b93fc6"/></linearGradient></defs><polygon points="36.5,12 46,20 45.6,38.6 33.5,44 27,39.5 32,17" fill="url(#gb)"/><polygon points="18.7,12 28.8,13 33,17.3 30,30 17,43 13.9,24.4" fill="url(#gp)"/><polygon points="13.9,30.3 17.8,25.6 22,28 19,35" fill="#fc8a1f"/><polygon points="17,43 27,39.5 22,34" fill="#b33dd0"/><rect x="20.2" y="18.2" width="19.7" height="19.7" fill="#000"/><text x="22" y="29" font-family="Liberation Mono" font-weight="bold" font-size="12.5" fill="#fff" letter-spacing="-1.5">IJ</text><rect x="22" y="33.6" width="8" height="1.8" fill="#fff"/></svg>
<div class="r" style="left:2638px;top:28px;width:20px;height:2px;background:#bfbfbf;"></div>
<svg style="left:2731px;top:17px" width="23" height="23"><path d="M5 4.5 V1 H21 V16 H17.5" fill="none" stroke="#bfbfbf" stroke-width="2"/><rect x="1" y="5" width="16" height="16" fill="none" stroke="#bfbfbf" stroke-width="2"/></svg>
<svg style="left:2825px;top:17px" width="22" height="22"><path d="M1 1 L21 21 M21 1 L1 21" stroke="#bfbfbf" stroke-width="2"/></svg>
<div class="r" style="left:2152px;top:1330px;width:676px;height:151px;background:#4e5052;border-top:1px solid #5a5c5e;box-shadow:0 1px 2px rgba(0,0,0,0.3)"></div>
<svg style="left:2173px;top:1348px" width="31" height="26"><path d="M6 25 C-4 20 1 8 13 7 C20 6 26 4 28 0 C32 9 30 24 14 25 Z" fill="#62a447"/><path d="M6 23.5 C13 22 20 18 24 11" stroke="#4e5052" stroke-width="1.6" fill="none"/></svg>
<div class="t" style="left:2216px;top:1348.67px;font-size:25.2px;line-height:25.2px;color:#cdcdcd;font-weight:bold;">Spring Configuration Check</div>
<div class="t" style="left:2216px;top:1388.08px;font-size:25.9px;line-height:25.9px;color:#c4c4c4;font-weight:normal;">Unmapped Spring configuration files found....</div>
<svg style="left:2785px;top:1395px" width="24" height="15"><polyline points="1.5,1.5 12,12 22.5,1.5" fill="none" stroke="#6f7274" stroke-width="3"/></svg>
<div class="t" style="left:2216px;top:1436.50px;font-size:25.4px;line-height:25.4px;color:#589df6;font-weight:normal;">Show Help</div>
<div class="t" style="left:2371px;top:1437.26px;font-size:24.5px;line-height:24.5px;color:#589df6;font-weight:normal;">Disable...</div>
<div class="r" style="left:2152px;top:1506px;width:676px;height:97px;background:#4e5052;border-top:1px solid #5a5c5e;box-shadow:0 1px 2px rgba(0,0,0,0.3)"></div>
<svg style="left:2173px;top:1521px" width="29" height="29"><circle cx="14.5" cy="14.5" r="14" fill="#3592c4"/><rect x="12.5" y="12" width="4" height="10" fill="#fff"/><rect x="12.5" y="6.5" width="4" height="3.5" fill="#fff"/></svg>
<div class="t" style="left:2216px;top:1524.41px;font-size:25.5px;line-height:25.5px;color:#cdcdcd;font-weight:bold;">IntelliJ IDEA 2022.2.4 available</div>
<div class="t" style="left:2216px;top:1558.50px;font-size:25.4px;line-height:25.4px;color:#589df6;font-weight:normal;">Update...</div>
<svg style="left:0;top:0" width="2880" height="1706"><polygon points="1045.9,266.0 1048.8,183.5 1053.3,185.5 1045.0,167.5 1036.8,185.5 1041.3,183.5 1045.1,266.0" fill="#fb3234"/></svg>
<svg style="left:0;top:0" width="2880" height="1706"><polygon points="1303.7,340.8 1168.9,544.8 1166.2,540.7 1162.0,563.0 1180.5,549.9 1175.6,549.1 1304.3,341.2" fill="#fb3234"/></svg>
<svg style="left:0;top:0" width="2880" height="1706"><polygon points="1721.0,589.3 1290.2,610.8 1292.0,606.9 1273.5,616.0 1292.9,622.9 1290.7,619.2 1721.0,590.1" fill="#fb3234"/></svg>
<svg style="left:0;top:0" width="2880" height="1706"><polygon points="2027.9,531.6 1407.7,750.3 1408.2,745.7 1393.0,759.6 1413.6,760.7 1410.3,757.4 2028.1,532.4" fill="#fb3234"/></svg>
<div class="r" style="left:2576px;top:1653px;width:302px;height:48px;background:#ffffff;border:1px solid #b6c6dd;border-right:none"></div>
<div class="r" style="left:2576px;top:1703px;width:304px;height:3px;background:#c9d2dc;"></div>
<svg style="left:2518px;top:1640px" width="76" height="66"><defs><linearGradient id="so" x1="0" y1="0" x2="0" y2="1"><stop offset="0" stop-color="#f57a45"/><stop offset="1" stop-color="#e9501c"/></linearGradient></defs><path d="M8 18 L54 4 Q58 3 60 7 L70 45 Q71 49 67 51 L24 64 Q20 65 18 61 L6 23 Q5 19 8 18 Z" fill="url(#so)"/><path d="M52 16 C40 14 24 18 22 27 C20 34 30 35 40 35 C48 35 50 40 40 45 C34 48 26 49 20 49" fill="none" stroke="#fff" stroke-width="8" stroke-linecap="round"/></svg>
<svg style="left:2601px;top:1665px" width="28" height="27"><rect x="2" y="6" width="24" height="12" fill="none" stroke="#0a6ed6" stroke-width="3.5"/><rect x="12.3" y="0" width="3.5" height="27" fill="#0a6ed6"/></svg>
<svg style="left:2651px;top:1668px" width="24" height="20"><circle cx="5" cy="4" r="3.5" fill="#0a6ed6"/><circle cx="19" cy="16" r="3.5" fill="#0a6ed6"/></svg>
<svg style="left:2699px;top:1662px" width="24" height="32"><rect x="6" y="0" width="12" height="20" rx="6" fill="#0a6ed6"/><path d="M2 15 A10 10 0 0 0 22 15 M12 25 V31 M7 31 H17" fill="none" stroke="#0a6ed6" stroke-width="3"/></svg>
<svg style="left:2745px;top:1667px" width="30" height="24"><rect x="1.5" y="1.5" width="27" height="21" rx="2" fill="none" stroke="#0a6ed6" stroke-width="3"/><g fill="#0a6ed6"><rect x="5" y="5" width="4" height="3"/><rect x="11" y="5" width="4" height="3"/><rect x="17" y="5" width="4" height="3"/><rect x="23" y="5" width="3" height="3"/><rect x="5" y="10" width="4" height="3"/><rect x="11" y="10" width="4" height="3"/><rect x="17" y="10" width="4" height="3"/><rect x="23" y="10" width="3" height="3"/><rect x="7" y="16" width="16" height="3"/></g></svg>
<svg style="left:2793px;top:1665px" width="30" height="26"><path d="M0 5 L9 0 Q15 5 21 0 L30 5 L28 12 L24 11 L24 26 L6 26 L6 11 L2 12 Z" fill="#0a6ed6"/></svg>
<svg style="left:2842px;top:1665px" width="27" height="27"><rect x="0" y="0" width="11.5" height="11.5" rx="2" fill="#0a6ed6"/><rect x="15" y="0" width="11.5" height="11.5" rx="2" fill="#0a6ed6"/><rect x="18.5" y="3.5" width="4.5" height="4.5" fill="#fff"/><rect x="0" y="15" width="11.5" height="11.5" rx="2" fill="#0a6ed6"/><rect x="15" y="15" width="11.5" height="11.5" rx="2" fill="#0a6ed6"/></svg>
<div class="t" style="left:2654px;top:1676px;font-size:20px;line-height:20px;color:rgba(120,120,120,0.85)">CSDN @</div>
<svg style="left:2728px;top:1677px" width="150" height="22"><g fill="none" stroke="rgba(120,120,120,0.85)" stroke-width="1.6" transform="scale(1.08,1.1)"><rect x="3" y="1" width="11" height="8"/><path d="M6 12 L1 17 M11 12 L16 17"/><rect x="23" y="1" width="15" height="16"/><path d="M25 6 H36 M30 3 V13 L26 15 M30 10 L35 15"/><path d="M48 1 L47 8 M44 5 H60 L59 16 L56 16 M52 5 L44 17 M53 9 L55 12"/><path d="M68 1 L64 9 M66 6 V17 M71 3 H82 L80 7 M76 6 V17 L74 16 M72 10 L70 14 M79 10 L82 14"/><path d="M88 2 H104 M96 2 L94 6 M90 6 H102 V17 M90 6 V17 M94 6 V16 M98 6 V16"/><path d="M109 3 L111 5 M108 8 L110 10 M108 16 L111 12 M114 2 H122 V7 H114 Z M113 10 H124 V17 H113 Z M117 10 V17 M120 10 V17"/></g></svg>
</body></html>
